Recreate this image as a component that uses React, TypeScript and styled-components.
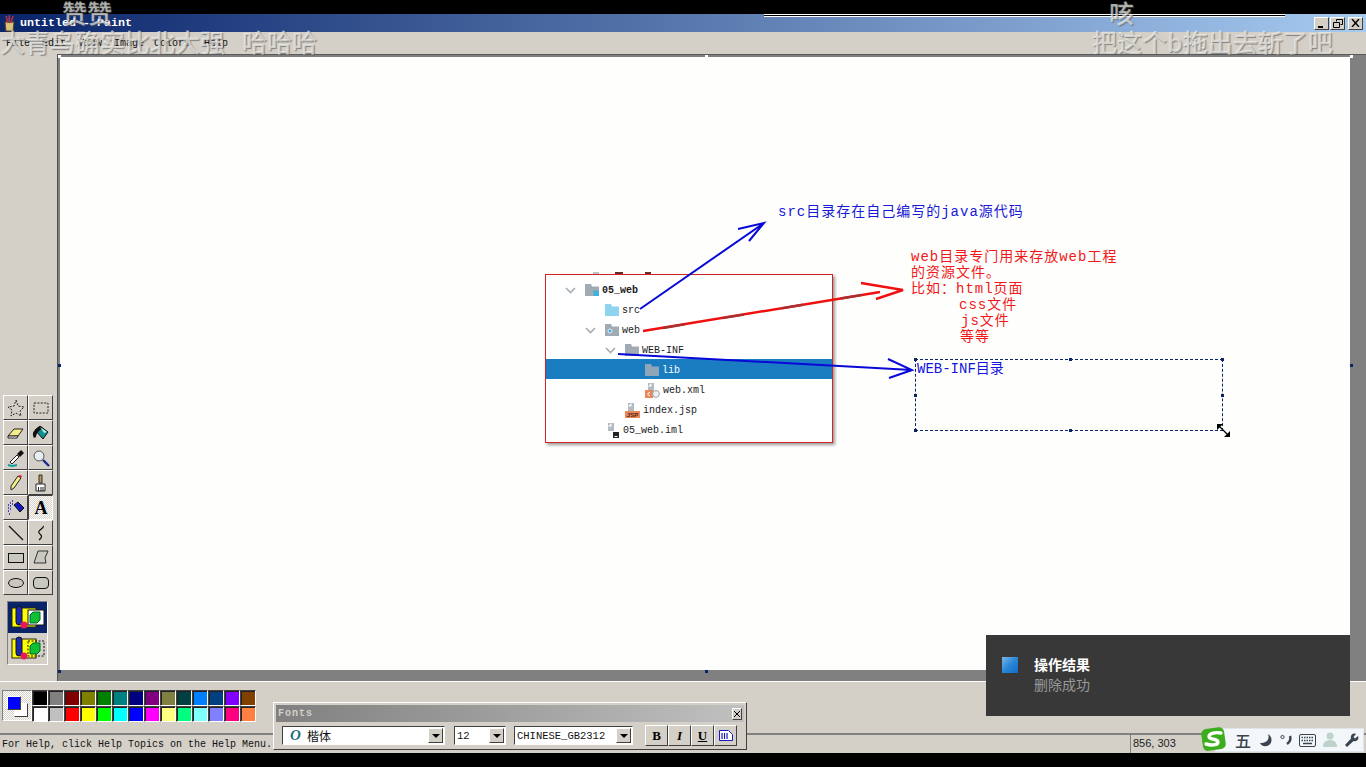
import React from 'react'
import styled, { createGlobalStyle, css } from 'styled-components'

const MONO = `"Liberation Mono", "Noto Sans CJK SC", monospace`
const CJK = `"Noto Sans CJK SC", "Liberation Sans", sans-serif`
const FACE = '#d4d0c8'

const GlobalStyle = createGlobalStyle`
  html, body {
    margin: 0;
    padding: 0;
    background: #000;
  }
  * {
    box-sizing: border-box;
  }
`

const raised = css`
  border-top: 1px solid #fff;
  border-left: 1px solid #fff;
  border-right: 1px solid #404040;
  border-bottom: 1px solid #404040;
  background-color: ${FACE};
`

const sunken = css`
  border-top: 1px solid #808080;
  border-left: 1px solid #808080;
  border-right: 1px solid #fff;
  border-bottom: 1px solid #fff;
`

const Screen = styled.div`
  position: relative;
  width: 1366px;
  height: 767px;
  overflow: hidden;
  display: flex;
  flex-direction: column;
  background: #000;
`

const BlackStrip = styled.div`
  height: 14px;
  flex: none;
  background: #000;
`

const TitleBar = styled.div`
  height: 18px;
  flex: none;
  display: flex;
  align-items: center;
  padding: 0 3px;
  background: linear-gradient(90deg, #0a246a 0%, #a6caf0 100%);
`

const TitleText = styled.span`
  margin-left: 4px;
  font: bold 11.67px ${MONO};
  color: #fff;
  white-space: pre;
`

const WindowButtons = styled.div`
  margin-left: auto;
  display: flex;
`

const WindowButton = styled.div<{ $gap?: number }>`
  ${raised}
  width: 15px;
  height: 13px;
  margin-left: ${({ $gap }) => $gap ?? 1}px;
  display: flex;
  align-items: center;
  justify-content: center;
`

const MenuBar = styled.div`
  height: 22px;
  flex: none;
  display: flex;
  align-items: center;
  padding-left: 6px;
  background: ${FACE};
`

const MenuItem = styled.span<{ $width: number }>`
  width: ${({ $width }) => $width}px;
  font: 10px ${MONO};
  color: #111;
  margin-top: 1px;
`

const Main = styled.div`
  height: 627px;
  flex: none;
  display: flex;
`

const Toolbox = styled.div`
  width: 57px;
  flex: none;
  display: flex;
  flex-direction: column;
  justify-content: flex-end;
  padding: 0 0 16px 3px;
  background: ${FACE};
`

const ToolGrid = styled.div`
  display: grid;
  grid-template-columns: 25px 25px;
  grid-auto-rows: 25px;
`

const ToolButton = styled.div<{ $active?: boolean }>`
  ${raised}
  display: flex;
  align-items: center;
  justify-content: center;
  ${({ $active }) =>
    $active &&
    css`
      border-color: #404040 #fff #fff #404040;
      background: repeating-conic-gradient(#fff 0 25%, ${FACE} 0 50%) 0 0 / 2px 2px;
    `}
`

const ToolOptions = styled.div`
  ${sunken}
  width: 41px;
  height: 64px;
  margin: 6px 0 0 4px;
  display: flex;
  flex-direction: column;
`

const ToolOption = styled.div<{ $active?: boolean }>`
  flex: 1;
  display: flex;
  align-items: center;
  justify-content: center;
  background: ${({ $active }) => ($active ? '#0a246a' : 'transparent')};
`

const Workspace = styled.div`
  flex: 1;
  display: flex;
  padding: 2px 16px 11px 2px;
  background: #808080;
  border-top: 1px solid #5a5a5a;
  border-left: 1px solid #505050;
`

const Canvas = styled.div`
  position: relative;
  flex: 1;
  background: #fefefd;
`

const Handle = styled.i<{ $x: number; $y: number; $light?: boolean }>`
  position: absolute;
  left: ${({ $x }) => $x - 60}px;
  top: ${({ $y }) => $y - 57}px;
  width: 3px;
  height: 3px;
  background: ${({ $light }) => ($light ? '#fff' : '#0a246a')};
`

const DrawLayer = styled.svg`
  position: absolute;
  inset: 0;
  width: 100%;
  height: 100%;
  z-index: 3;
  pointer-events: none;
`

const ScreenshotClip = styled.div`
  position: absolute;
  left: 485px;
  top: 217px;
  width: 288px;
  height: 169px;
  padding-top: 4px;
  border: 1px solid #d02426;
  background: #fff;
  box-shadow: 2px 2px 3px rgba(0, 0, 0, 0.4);
`

const ClipRemnant = styled.div`
  position: absolute;
  left: 47px;
  top: -3px;
  width: 62px;
  height: 2px;
  background: linear-gradient(90deg, #b8c2c8 0 6px, transparent 6px 22px, #6a2a2a 22px 30px, transparent 30px 52px, #6a2a2a 52px 58px, transparent 58px);
`

const TreeRow = styled.div<{ $level: number; $selected?: boolean }>`
  height: 20px;
  display: flex;
  align-items: center;
  padding-top: 2px;
  padding-left: ${({ $level }) => 19 + $level * 20}px;
  background: ${({ $selected }) => ($selected ? '#1a7dc2' : 'transparent')};
`

const ChevronSlot = styled.div`
  width: 20px;
  flex: none;
  display: flex;
`

const TreeLabel = styled.span<{ $bold?: boolean; $selected?: boolean }>`
  margin-left: 3px;
  font: ${({ $bold }) => ($bold ? 'bold' : 'normal')} 10px ${MONO};
  color: ${({ $selected }) => ($selected ? '#fff' : '#1a1a1a')};
`

const Note = styled.div<{ $x: number; $y: number; $color: string }>`
  position: absolute;
  left: ${({ $x }) => $x - 60}px;
  top: ${({ $y }) => $y - 57}px;
  font: 14px/16px ${MONO};
  letter-spacing: 1px;
  color: ${({ $color }) => $color};
  white-space: nowrap;
`

const NoteLine = styled.div<{ $indent?: number }>`
  padding-left: ${({ $indent }) => $indent ?? 0}px;
`

const TextBox = styled.div`
  position: absolute;
  left: 855px;
  top: 302px;
  width: 308px;
  height: 72px;
  padding: 1px 0 0 1px;
  border: 1px dashed #0a246a;
  font: 14px/16px ${MONO};
  color: #1414e0;
  white-space: nowrap;
`

const ResizeCursor = styled.svg`
  position: absolute;
  left: 1156px;
  top: 366px;
  z-index: 4;
`

const ColorBar = styled.div`
  height: 52px;
  flex: none;
  display: flex;
  align-items: flex-start;
  padding: 8px 0 0 2px;
  background: ${FACE};
  border-top: 1px solid #fff;
`

const ColorWell = styled.div`
  ${sunken}
  position: relative;
  width: 30px;
  height: 31px;
  background: repeating-conic-gradient(#fff 0 25%, ${FACE} 0 50%) 0 0 / 2px 2px;
`

const WellColor = styled.div<{ $color: string; $x: number; $y: number }>`
  position: absolute;
  left: ${({ $x }) => $x}px;
  top: ${({ $y }) => $y}px;
  width: 14px;
  height: 14px;
  background: ${({ $color }) => $color};
  border: 1px solid;
  border-color: #fff #404040 #404040 #fff;
`

const Palette = styled.div`
  display: grid;
  grid-template-columns: repeat(14, 16px);
  grid-auto-rows: 16px;
`

const Swatch = styled.div<{ $color: string }>`
  background: ${({ $color }) => $color};
  border: 1px solid;
  border-color: #404040 #fff #fff #404040;
  box-shadow: inset 1px 1px 0 #222;
`

const StatusBar = styled.div`
  height: 20px;
  flex: none;
  display: flex;
  align-items: center;
  background: ${FACE};
  border-top: 2px solid #808080;
`

const StatusText = styled.div`
  flex: 1;
  padding-left: 2px;
  font: 10px ${MONO};
  color: #111;
`

const StatusCoords = styled.div`
  width: 236px;
  height: 100%;
  padding: 2px 0 0 2px;
  font: 11px "Liberation Sans", sans-serif;
  color: #222;
  border-left: 1px solid #808080;
`

const FontsWindow = styled.div`
  position: absolute;
  left: 273px;
  top: 702px;
  width: 474px;
  height: 48px;
  padding: 2px;
  background: ${FACE};
  border: 1px solid;
  border-color: #fff #404040 #404040 #fff;
  z-index: 5;
`

const FontsTitle = styled.div`
  height: 17px;
  display: flex;
  align-items: center;
  justify-content: space-between;
  padding: 0 2px 0 2px;
  background: linear-gradient(90deg, #808080, #c0c0c0);
  font: bold 10px ${MONO};
  letter-spacing: 1px;
  color: ${FACE};
`

const FontsClose = styled.div`
  ${raised}
  width: 10px;
  height: 12px;
  display: flex;
  align-items: center;
  justify-content: center;
`

const FontsRow = styled.div`
  display: flex;
  align-items: center;
  height: 25px;
  padding: 2px 0 0 6px;
`

const Combo = styled.div<{ $width: number; $gap: number }>`
  width: ${({ $width }) => $width}px;
  height: 19px;
  margin-right: ${({ $gap }) => $gap}px;
  display: flex;
  align-items: center;
  background: #fff;
  border: 1px solid;
  border-color: #404040 #fff #fff #404040;
  padding: 0 1px 0 2px;
`

const ComboText = styled.span<{ $mono?: boolean }>`
  flex: 1;
  white-space: nowrap;
  font: ${({ $mono }) => ($mono ? `10.5px ${MONO}` : `12px ${CJK}`)};
  color: #111;
`

const FontGlyph = styled.span`
  width: 22px;
  padding-left: 5px;
  font: italic bold 15px "Liberation Serif", serif;
  color: #1f6f78;
`

const ComboArrow = styled.div`
  ${raised}
  width: 15px;
  height: 15px;
  display: flex;
  align-items: center;
  justify-content: center;
  &::after {
    content: '';
    border-left: 4px solid transparent;
    border-right: 4px solid transparent;
    border-top: 4px solid #000;
  }
`

const StyleButtons = styled.div`
  display: flex;
  margin-left: 1px;
`

const StyleButton = styled.div<{ $italic?: boolean; $underline?: boolean }>`
  ${raised}
  width: 23px;
  height: 21px;
  display: flex;
  align-items: center;
  justify-content: center;
  font-family: "Liberation Serif", serif;
  font-size: 13px;
  font-weight: bold;
  font-style: ${({ $italic }) => ($italic ? 'italic' : 'normal')};
  text-decoration: ${({ $underline }) => ($underline ? 'underline' : 'none')};
  color: #000;
`

const Toast = styled.div`
  position: absolute;
  left: 986px;
  top: 635px;
  width: 364px;
  height: 81px;
  display: flex;
  align-items: flex-start;
  padding: 22px 0 0 16px;
  background: #383838;
  z-index: 6;
`

const ToastIcon = styled.div`
  width: 16px;
  height: 16px;
  flex: none;
  background: linear-gradient(135deg, #7db8ea 0%, #2b86d8 50%, #0f6cc9 100%);
`

const ToastBody = styled.div`
  margin-left: 16px;
  margin-top: -3px;
`

const ToastTitle = styled.div`
  font: bold 14px/20px ${CJK};
  color: #fff;
`

const ToastText = styled.div`
  font: 14px/20px ${CJK};
  color: #9a9a9a;
`

const ImeBar = styled.div`
  position: absolute;
  left: 1215px;
  top: 728px;
  width: 149px;
  height: 24px;
  display: flex;
  align-items: center;
  justify-content: space-between;
  padding: 0 4px 0 19px;
  background: #f3f7f9;
  border: 1px solid #dfe6ea;
  z-index: 6;
`

const ImeLogo = styled.svg`
  position: absolute;
  left: 1200px;
  top: 724px;
  z-index: 7;
`

const ImeChar = styled.span`
  font: 500 16px ${CJK};
  color: #3a4450;
`

const ScrollLine = styled.div`
  position: absolute;
  left: 764px;
  top: 14px;
  width: 521px;
  height: 3px;
  background: #000;
  border-top: 1px solid #fff;
  border-bottom: 1px solid #fff;
  z-index: 2;
`

const Danmaku = styled.div<{ $x: number; $y: number }>`
  position: absolute;
  left: ${({ $x }) => $x}px;
  top: ${({ $y }) => $y}px;
  font: 500 25px/28px ${CJK};
  color: rgba(244, 244, 240, 0.66);
  text-shadow: 1px 1px 1px rgba(90, 90, 90, 0.65);
  white-space: pre;
  z-index: 8;
`

const palette = [
  '#000000', '#808080', '#800000', '#808000', '#008000', '#008080', '#000080',
  '#800080', '#808040', '#004040', '#0080ff', '#004080', '#8000ff', '#804000',
  '#ffffff', '#c0c0c0', '#ff0000', '#ffff00', '#00ff00', '#00ffff', '#0000ff',
  '#ff00ff', '#ffff80', '#00ff80', '#80ffff', '#8080ff', '#ff0080', '#ff8040',
]

const menus: [string, number][] = [
  ['File', 36], ['Edit', 36], ['View', 36], ['Image', 40], ['Colors', 50], ['Help', 30],
]

const Chevron = ({ selected }: { selected?: boolean }) => (
  <svg width="11" height="7" viewBox="0 0 11 7">
    <path d="M1 1l4.5 4.5L10 1" fill="none" stroke={selected ? '#fff' : '#a3adb3'} strokeWidth="1.6" />
  </svg>
)

const Folder = ({ color = '#a0abb3', badge }: { color?: string; badge?: 'module' | 'web' }) => (
  <svg width="14" height="12" viewBox="0 0 14 12">
    <path d="M0 0h6l1 2.5h7V12H0z" fill={color} />
    {badge === 'module' && <rect x="8.5" y="6.5" width="5.5" height="5.5" fill="#3fb0dc" />}
    {badge === 'web' && <circle cx="5" cy="7" r="2" fill="#3fa6dc" stroke="#e8f4fa" />}
  </svg>
)

const FileIcon = ({ kind }: { kind: 'xml' | 'jsp' | 'iml' }) => (
  <svg width="15" height="15" viewBox="0 0 15 15">
    <path d="M3 0h6v8H3z" fill="#b2bbc1" />
    <path d="M3 3.5L6.5 0v3.5z" fill="#fff" />
    {kind === 'xml' && (
      <>
        <rect x="0" y="7" width="8" height="8" fill="#e8875a" />
        <path d="M5 9l-2.5 2L5 13" fill="none" stroke="#fff" strokeWidth="1" />
        <circle cx="11" cy="11" r="3.4" fill="#eef1f3" stroke="#98a4ab" />
      </>
    )}
    {kind === 'jsp' && (
      <>
        <rect x="0" y="8" width="15" height="7" fill="#e8875a" />
        <text x="7.5" y="14" textAnchor="middle" fontSize="6" fontWeight="bold" fontFamily="Liberation Sans" fill="#4a2412">JSP</text>
      </>
    )}
    {kind === 'iml' && (
      <>
        <rect x="8" y="9" width="6" height="6" fill="#222" />
        <rect x="9.5" y="13" width="3" height="1" fill="#fff" />
      </>
    )}
  </svg>
)

const icons = [
  <svg width="18" height="18" viewBox="0 0 18 18" key="free">
    <path d="M9 1l2 6 6 1-4 4 1 5-5-3-5 3 1-6-4-3 6-1z" fill="none" stroke="#222" strokeDasharray="2 1.4" />
  </svg>,
  <svg width="18" height="18" viewBox="0 0 18 18" key="select">
    <rect x="2" y="4" width="14" height="10" fill="none" stroke="#222" strokeDasharray="2 1.4" />
  </svg>,
  <svg width="18" height="18" viewBox="0 0 18 18" key="eraser">
    <path d="M1 12l6-7h9l-5 7z" fill="#f4ee8a" stroke="#222" />
    <path d="M1 12v2h9l1-2z" fill="#fff" stroke="#222" />
  </svg>,
  <svg width="18" height="18" viewBox="0 0 18 18" key="fill">
    <path d="M3 6l5-4 8 6-5 7z" fill="#0f8f8f" stroke="#111" />
    <path d="M3 6c-2 2-3 4-1 8l2-1c0-2 1-4 3-6l4-3-3-2z" fill="#111" />
    <path d="M8 3l7 5-3 1z" fill="#bfe9e9" />
  </svg>,
  <svg width="18" height="18" viewBox="0 0 18 18" key="picker">
    <path d="M3 13l7-7 2 2-7 7z" fill="#fff" stroke="#222" />
    <path d="M10 5l4-4 3 3-4 4z" fill="#111" />
    <path d="M1 16l4 1 5-1" fill="none" stroke="#0fa0a0" strokeWidth="2" />
  </svg>,
  <svg width="18" height="18" viewBox="0 0 18 18" key="zoom">
    <circle cx="7" cy="7" r="5" fill="#e6eef2" stroke="#555" />
    <path d="M11 11l6 6" stroke="#1a2a90" strokeWidth="2.4" />
  </svg>,
  <svg width="18" height="18" viewBox="0 0 18 18" key="pencil">
    <path d="M4 12l7-10 3 2-7 10-3 2z" fill="#f4ee8a" stroke="#222" />
    <path d="M11 2l3 2 1-2-2-1z" fill="#d02030" />
  </svg>,
  <svg width="18" height="18" viewBox="0 0 18 18" key="brush">
    <path d="M7 1h3v8H7z" fill="#b89a50" stroke="#333" />
    <path d="M4 10h9v7H4z" fill="#fff" stroke="#222" />
    <path d="M6.500 13v4M9 13v4M11 13v4" stroke="#222" />
  </svg>,
  <svg width="18" height="18" viewBox="0 0 18 18" key="spray">
    <path d="M7 6l4-3 6 6-4 4z" fill="#1418c0" stroke="#111" />
    <path d="M1 6h1M3 4h1M5 2h1M1 9h1M3 7h1M5 5h1M1 12h1M3 10h1M2 15h1" stroke="#1418c0" strokeWidth="1.4" />
  </svg>,
  <svg width="18" height="18" viewBox="0 0 18 18" key="text">
    <text x="9" y="15" textAnchor="middle" fontFamily="Liberation Serif" fontWeight="bold" fontSize="18" fill="#000">A</text>
  </svg>,
  <svg width="18" height="18" viewBox="0 0 18 18" key="line">
    <path d="M2 2l14 14" stroke="#111" strokeWidth="1.3" />
  </svg>,
  <svg width="18" height="18" viewBox="0 0 18 18" key="curve">
    <path d="M11 2c2 2-6 4-4 7 1 2 4 2 2 5l-2 2" fill="none" stroke="#111" strokeWidth="1.2" />
  </svg>,
  <svg width="18" height="18" viewBox="0 0 18 18" key="rect">
    <rect x="1.500" y="4.500" width="15" height="9" fill="#c8c8c0" stroke="#111" />
  </svg>,
  <svg width="18" height="18" viewBox="0 0 18 18" key="poly">
    <path d="M6 2h10l-3 7 1 5H2z" fill="#c8c8c0" stroke="#333" />
  </svg>,
  <svg width="18" height="18" viewBox="0 0 18 18" key="ellipse">
    <ellipse cx="9" cy="9" rx="7.500" ry="4.500" fill="#c8c8c0" stroke="#111" />
  </svg>,
  <svg width="18" height="18" viewBox="0 0 18 18" key="round">
    <rect x="1.500" y="3.500" width="15" height="11" rx="3.500" fill="#c8c8c0" stroke="#111" />
  </svg>,
]

const OptionIcon = ({ outlined }: { outlined?: boolean }) => (
  <svg width="36" height="26" viewBox="0 0 36 26">
    <rect x="2" y="3" width="24" height="19" fill="#ffff00" stroke="#222" />
    <rect x="6" y="1" width="6" height="19" rx="3" fill="#1a2ab0" stroke="#111" />
    <circle cx="14" cy="20" r="3.500" fill="#e81860" />
    <rect x="18" y="5" width="16" height="15" fill={outlined ? 'none' : '#fff'} stroke="#111" strokeDasharray={outlined ? '2 1.5' : undefined} />
    <path d="M20 10l3-3h7v8l-3 3h-7z" fill="#10c030" stroke="#063" />
  </svg>
)

const TitleIcon = () => (
  <svg width="13" height="17" viewBox="0 0 13 17">
    <path d="M2 7h9l-1 9H3z" fill="#d9c27a" stroke="#5a4a1a" />
    <path d="M3 1l2 7M6.500 0v8M10 1L8 8" stroke="#c03030" strokeWidth="1.5" />
    <path d="M5 1l1 7" stroke="#2050c0" strokeWidth="1" />
  </svg>
)

const App: React.FC = () => (
  <>
    <GlobalStyle />
    <Screen>
      <BlackStrip />
      <TitleBar>
        <TitleIcon />
        <TitleText>untitled - Paint</TitleText>
        <WindowButtons>
          <WindowButton>
            <svg width="9" height="9" viewBox="0 0 9 9"><path d="M1 7h5v2H1z" fill="#000" /></svg>
          </WindowButton>
          <WindowButton>
            <svg width="10" height="9" viewBox="0 0 10 9">
              <path d="M3.500 2.500v-2h6v5h-2M.5 3.500h6v5h-6z" fill="none" stroke="#000" />
            </svg>
          </WindowButton>
          <WindowButton $gap={3}>
            <svg width="9" height="8" viewBox="0 0 9 8"><path d="M1 0l7 8M8 0L1 8" stroke="#000" strokeWidth="1.4" /></svg>
          </WindowButton>
        </WindowButtons>
      </TitleBar>
      <MenuBar>
        {menus.map(([label, width]) => (
          <MenuItem key={label} $width={width}>{label}</MenuItem>
        ))}
      </MenuBar>
      <Main>
        <Toolbox>
          <ToolGrid>
            {icons.map((icon, i) => (
              <ToolButton key={i} $active={i === 9}>{icon}</ToolButton>
            ))}
          </ToolGrid>
          <ToolOptions>
            <ToolOption $active><OptionIcon /></ToolOption>
            <ToolOption><OptionIcon outlined /></ToolOption>
          </ToolOptions>
        </Toolbox>
        <Workspace>
          <Canvas>
            <Handle $x={58} $y={55} $light />
            <Handle $x={705} $y={55} $light />
            <Handle $x={1350} $y={55} $light />
            <Handle $x={58} $y={364} />
            <Handle $x={1350} $y={364} />
            <Handle $x={58} $y={670} />
            <Handle $x={705} $y={670} />
            <ScreenshotClip>
              <ClipRemnant />
              <TreeRow $level={0}>
                <ChevronSlot><Chevron /></ChevronSlot>
                <Folder badge="module" />
                <TreeLabel $bold>05_web</TreeLabel>
              </TreeRow>
              <TreeRow $level={1}>
                <ChevronSlot />
                <Folder color="#8fd4ee" />
                <TreeLabel>src</TreeLabel>
              </TreeRow>
              <TreeRow $level={1}>
                <ChevronSlot><Chevron /></ChevronSlot>
                <Folder badge="web" />
                <TreeLabel>web</TreeLabel>
              </TreeRow>
              <TreeRow $level={2}>
                <ChevronSlot><Chevron /></ChevronSlot>
                <Folder />
                <TreeLabel>WEB-INF</TreeLabel>
              </TreeRow>
              <TreeRow $level={3} $selected>
                <ChevronSlot />
                <Folder color="#8fa6b8" />
                <TreeLabel $selected>lib</TreeLabel>
              </TreeRow>
              <TreeRow $level={3}>
                <ChevronSlot />
                <FileIcon kind="xml" />
                <TreeLabel>web.xml</TreeLabel>
              </TreeRow>
              <TreeRow $level={2}>
                <ChevronSlot />
                <FileIcon kind="jsp" />
                <TreeLabel>index.jsp</TreeLabel>
              </TreeRow>
              <TreeRow $level={1}>
                <ChevronSlot />
                <FileIcon kind="iml" />
                <TreeLabel>05_web.iml</TreeLabel>
              </TreeRow>
            </ScreenshotClip>

            <Note $x={778} $y={204} $color="#1818d8">src目录存在自己编写的java源代码</Note>
            <Note $x={911} $y={249} $color="#f01818">
              <NoteLine>web目录专门用来存放web工程</NoteLine>
              <NoteLine>的资源文件。</NoteLine>
              <NoteLine>比如：html页面</NoteLine>
              <NoteLine $indent={48}>css文件</NoteLine>
              <NoteLine $indent={50}>js文件</NoteLine>
              <NoteLine $indent={49}>等等</NoteLine>
            </Note>
            <TextBox>WEB-INF目录</TextBox>
            <Handle $x={914} $y={358} />
            <Handle $x={1069} $y={358} />
            <Handle $x={1221} $y={358} />
            <Handle $x={914} $y={394} />
            <Handle $x={1221} $y={394} />
            <Handle $x={914} $y={429} />
            <Handle $x={1069} $y={429} />
            <ResizeCursor width="15" height="15" viewBox="0 0 15 15">
              <path d="M2 2l11 11" stroke="#000" strokeWidth="1.2" />
              <path d="M1 1h6L1 7zM14 14H8l6-6z" fill="#000" />
            </ResizeCursor>

            <DrawLayer viewBox="60 57 1290 613" preserveAspectRatio="none">
              <g fill="none" stroke="#0808d8" strokeWidth="2">
                <path d="M640 309L764 223M738 229L764 223L749 241" />
                <path d="M618 354L912 370M888 359L912 370L889 378" />
              </g>
              <g fill="none" strokeWidth="2.400">
                <path d="M643 331L880 292" stroke="#f01010" />
                <path d="M663 328L880 292" stroke="#a83030" strokeDasharray="22 38" />
                <path d="M861 283L903 290L876 299" stroke="#f01010" />
              </g>
            </DrawLayer>
          </Canvas>
        </Workspace>
      </Main>
      <ColorBar>
        <ColorWell>
          <WellColor $color="#fff" $x={11} $y={12} />
          <WellColor $color="#0000ff" $x={4} $y={5} />
        </ColorWell>
        <Palette>
          {palette.map((color, i) => (
            <Swatch key={i} $color={color} />
          ))}
        </Palette>
      </ColorBar>
      <StatusBar>
        <StatusText>For Help, click Help Topics on the Help Menu.</StatusText>
        <StatusCoords>856, 303</StatusCoords>
      </StatusBar>
      <BlackStrip />

      <ScrollLine />

      <FontsWindow>
        <FontsTitle>
          Fonts
          <FontsClose>
            <svg width="6" height="6" viewBox="0 0 6 6"><path d="M0 0l6 6M6 0L0 6" stroke="#000" /></svg>
          </FontsClose>
        </FontsTitle>
        <FontsRow>
          <Combo $width={163} $gap={9}>
            <FontGlyph>O</FontGlyph>
            <ComboText>楷体</ComboText>
            <ComboArrow />
          </Combo>
          <Combo $width={52} $gap={8}>
            <ComboText $mono>12</ComboText>
            <ComboArrow />
          </Combo>
          <Combo $width={119} $gap={11}>
            <ComboText $mono>CHINESE_GB2312</ComboText>
            <ComboArrow />
          </Combo>
          <StyleButtons>
            <StyleButton>B</StyleButton>
            <StyleButton $italic>I</StyleButton>
            <StyleButton $underline>U</StyleButton>
            <StyleButton>
              <svg width="14" height="11" viewBox="0 0 14 11">
                <path d="M.5.5h9l4 4v6H.5z" fill="#fff" stroke="#1a1ac0" />
                <path d="M3 3v6M5.500 3v6M8 3v6" stroke="#1a1ac0" strokeWidth="1.2" />
              </svg>
            </StyleButton>
          </StyleButtons>
        </FontsRow>
      </FontsWindow>

      <Toast>
        <ToastIcon />
        <ToastBody>
          <ToastTitle>操作结果</ToastTitle>
          <ToastText>删除成功</ToastText>
        </ToastBody>
      </Toast>

      <ImeLogo width="28" height="30" viewBox="0 0 28 30">
        <rect x="2" y="4" width="23" height="22" rx="5" fill="#3cae1e" transform="rotate(-8 14 15)" />
        <path d="M21 9c-5-1-12 0-12 3.500s9 2 9 5.500-7 3.500-12 2" fill="none" stroke="#fff" strokeWidth="3.4" strokeLinecap="round" />
      </ImeLogo>
      <ImeBar>
        <ImeChar>五</ImeChar>
        <svg width="15" height="15" viewBox="0 0 15 15">
          <path d="M10 1c2 5-1 9-8 9 2 4 6 4 9 2s4-8-1-11z" fill="#3a4450" />
        </svg>
        <svg width="12" height="14" viewBox="0 0 12 14">
          <circle cx="2.500" cy="4" r="1.600" fill="none" stroke="#3a4450" />
          <path d="M10 3c1 3 0 6-3 8" fill="none" stroke="#3a4450" strokeWidth="2.4" />
        </svg>
        <svg width="17" height="13" viewBox="0 0 17 13">
          <rect x=".5" y=".5" width="16" height="12" rx="1.500" fill="none" stroke="#3a4450" />
          <path d="M2.500 3.500h12M2.500 6.500h12" stroke="#3a4450" strokeWidth="1.500" strokeDasharray="1.500 1" />
          <path d="M4 9.500h9" stroke="#3a4450" strokeWidth="1.500" />
        </svg>
        <svg width="14" height="16" viewBox="0 0 14 16">
          <circle cx="7" cy="4" r="3.500" fill="#bfd2cc" />
          <path d="M0 15c0-5 3-7 7-7s7 2 7 7z" fill="#bfd2cc" />
        </svg>
        <svg width="15" height="15" viewBox="0 0 15 15">
          <path d="M14 3l-3 2.500L9.500 4 12 1C9-.5 6 2 7 5.500L1 12l2 2 6.500-6c3 1 6-2 4.500-5z" fill="#3a4450" />
        </svg>
      </ImeBar>

      <Danmaku $x={62} $y={-2}>赞赞</Danmaku>
      <Danmaku $x={0} $y={27}>大青鸟确实比北大强   哈哈哈</Danmaku>
      <Danmaku $x={1109} $y={-2}>咳</Danmaku>
      <Danmaku $x={1092} $y={27}>把这个b拖出去斩了吧</Danmaku>
    </Screen>
  </>
)

export default App
